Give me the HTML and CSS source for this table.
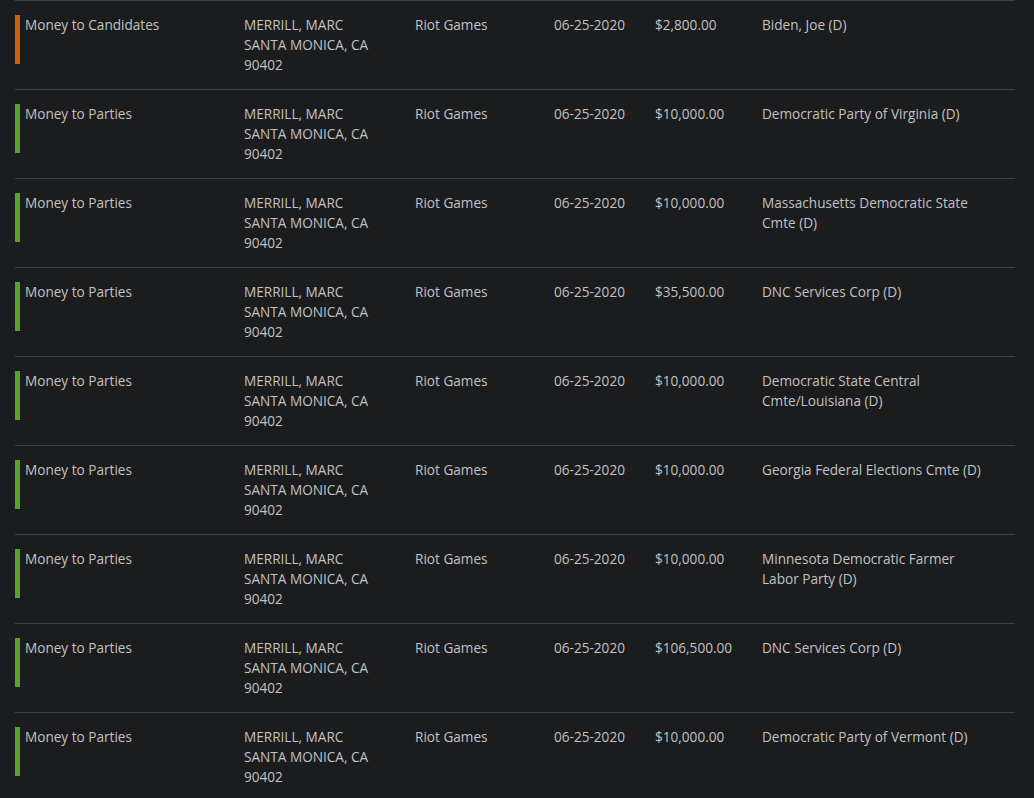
FILE: index.html
```html
<!DOCTYPE html>
<html>
<head>
<meta charset="utf-8">
<link rel="stylesheet" href="styles.css">
</head>
<body>
<div class="table">
  <div class="row">
    <div class="cell type"><span class="bar cand"></span>Money to Candidates</div>
    <div class="cell">MERRILL, MARC<br>SANTA MONICA, CA<br>90402</div>
    <div class="cell">Riot Games</div>
    <div class="cell">06-25-2020</div>
    <div class="cell">$2,800.00</div>
    <div class="cell recip">Biden, Joe (D)</div>
  </div>
  <div class="row">
    <div class="cell type"><span class="bar party"></span>Money to Parties</div>
    <div class="cell">MERRILL, MARC<br>SANTA MONICA, CA<br>90402</div>
    <div class="cell">Riot Games</div>
    <div class="cell">06-25-2020</div>
    <div class="cell">$10,000.00</div>
    <div class="cell recip">Democratic Party of Virginia (D)</div>
  </div>
  <div class="row">
    <div class="cell type"><span class="bar party"></span>Money to Parties</div>
    <div class="cell">MERRILL, MARC<br>SANTA MONICA, CA<br>90402</div>
    <div class="cell">Riot Games</div>
    <div class="cell">06-25-2020</div>
    <div class="cell">$10,000.00</div>
    <div class="cell recip">Massachusetts Democratic State Cmte (D)</div>
  </div>
  <div class="row">
    <div class="cell type"><span class="bar party"></span>Money to Parties</div>
    <div class="cell">MERRILL, MARC<br>SANTA MONICA, CA<br>90402</div>
    <div class="cell">Riot Games</div>
    <div class="cell">06-25-2020</div>
    <div class="cell">$35,500.00</div>
    <div class="cell recip">DNC Services Corp (D)</div>
  </div>
  <div class="row">
    <div class="cell type"><span class="bar party"></span>Money to Parties</div>
    <div class="cell">MERRILL, MARC<br>SANTA MONICA, CA<br>90402</div>
    <div class="cell">Riot Games</div>
    <div class="cell">06-25-2020</div>
    <div class="cell">$10,000.00</div>
    <div class="cell recip">Democratic State Central Cmte/Louisiana (D)</div>
  </div>
  <div class="row">
    <div class="cell type"><span class="bar party"></span>Money to Parties</div>
    <div class="cell">MERRILL, MARC<br>SANTA MONICA, CA<br>90402</div>
    <div class="cell">Riot Games</div>
    <div class="cell">06-25-2020</div>
    <div class="cell">$10,000.00</div>
    <div class="cell recip">Georgia Federal Elections Cmte (D)</div>
  </div>
  <div class="row">
    <div class="cell type"><span class="bar party"></span>Money to Parties</div>
    <div class="cell">MERRILL, MARC<br>SANTA MONICA, CA<br>90402</div>
    <div class="cell">Riot Games</div>
    <div class="cell">06-25-2020</div>
    <div class="cell">$10,000.00</div>
    <div class="cell recip">Minnesota Democratic Farmer Labor Party (D)</div>
  </div>
  <div class="row">
    <div class="cell type"><span class="bar party"></span>Money to Parties</div>
    <div class="cell">MERRILL, MARC<br>SANTA MONICA, CA<br>90402</div>
    <div class="cell">Riot Games</div>
    <div class="cell">06-25-2020</div>
    <div class="cell">$106,500.00</div>
    <div class="cell recip">DNC Services Corp (D)</div>
  </div>
  <div class="row">
    <div class="cell type"><span class="bar party"></span>Money to Parties</div>
    <div class="cell">MERRILL, MARC<br>SANTA MONICA, CA<br>90402</div>
    <div class="cell">Riot Games</div>
    <div class="cell">06-25-2020</div>
    <div class="cell">$10,000.00</div>
    <div class="cell recip">Democratic Party of Vermont (D)</div>
  </div>
</div>
</body>
</html>
```
FILE: styles.css
```css
html, body {
  margin: 0;
  padding: 0;
  background: #1b1c1e;
}
body {
  font-family: "Open Sans", "Liberation Sans", sans-serif;
  font-size: 13.6px;
  line-height: 20px;
  color: #c2c2c2;
}
.table {
  width: 1000px;
  margin-left: 15px;
}
.row {
  display: grid;
  grid-template-columns: 229px 171px 139px 101px 107px 226px;
  border-top: 1px solid #404143;
  padding: 14px 0 14px;
  height: 60px;
}
.cell {
  min-width: 0;
}
.type {
  display: flex;
  align-items: flex-start;
}
.bar {
  display: block;
  flex: none;
  width: 5px;
  height: 49px;
  margin-right: 5px;
}
.cand { background: #d0600e; }
.party { background: #5aa32a; }
```
